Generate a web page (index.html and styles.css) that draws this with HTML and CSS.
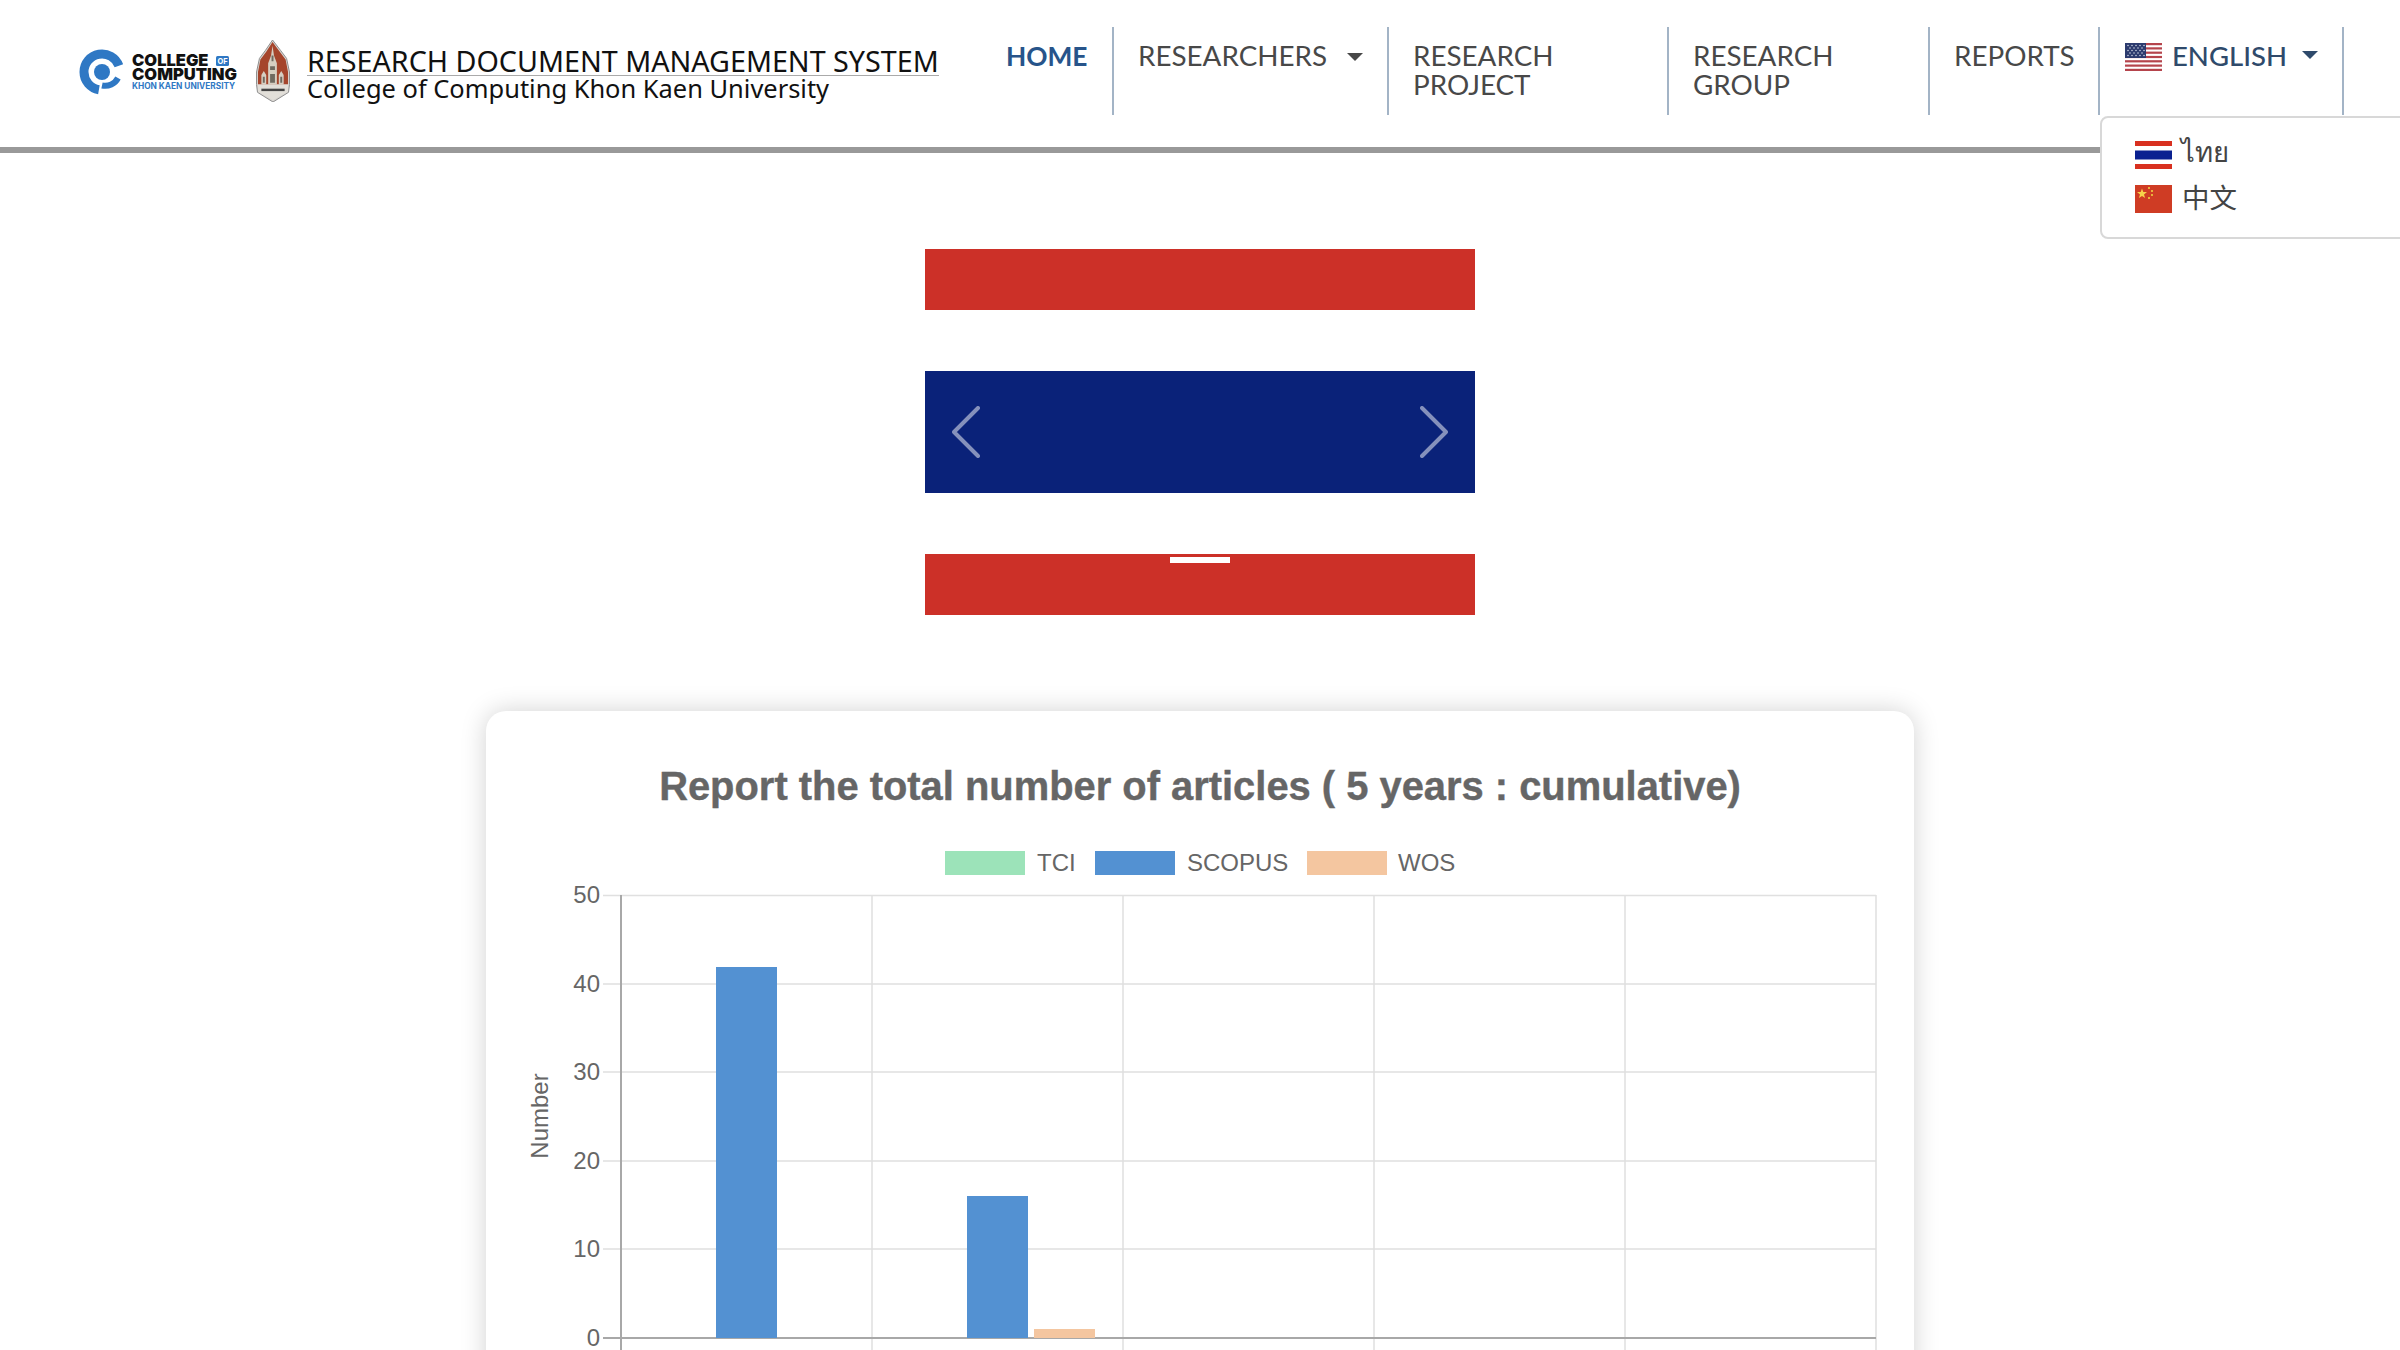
FILE: index.html
```html
<!DOCTYPE html>
<html lang="en">
<head>
<meta charset="utf-8">
<title>Research Document Management System</title>
<link rel="stylesheet" href="styles.css">
</head>
<body>
<header class="site-header">
  <a class="brand" href="#">
    <svg class="logo-coc" viewBox="0 0 162 50" width="162" height="50" aria-label="College of Computing">
      <path d="M40.900 18.800A18 18 0 1 0 20.900 42.700" class="logo-ring"/>
      <path d="M24 38.500A14.500 14.500 0 0 0 40 31" class="logo-ring-thin"/>
      <circle cx="24" cy="25" r="8" class="logo-dot"/>
      <rect x="138" y="9" width="13" height="10" rx="1.500" class="logo-of-box"/>
      <text class="logo-of" x="144.500" y="17">OF</text>
      <text class="logo-words"><tspan x="54" y="19" class="logo-big">COLLEGE</tspan><tspan x="54" y="33" class="logo-big">COMPUTING</tspan><tspan x="54" y="42" class="logo-small">KHON KAEN UNIVERSITY</tspan></text>
    </svg>
    <svg class="logo-crest" viewBox="0 0 38 64" width="38" height="62" aria-hidden="true">
      <path d="M18.500 0L27 11L33 19L36 33V46L35 54L19 64L3 54L2 46V33L5 19L11 11Z" class="crest-edge"/>
      <path d="M18.500 2L26 12L32 20L34.500 33V46H3.500V33L6 20L12 12Z" class="crest-red"/>
      <path d="M18.500 6L20 16L23 24V46H14V24L17 16Z" class="crest-tower"/>
      <path d="M7 46V36L9.500 32L12 36V46ZM25 46V36L27.500 32L30 36V46Z" class="crest-tower"/>
      <path d="M17.500 16h2v6h-2zM16 27h5v4h-5zM16 35h5v9h-5zM8.500 38h2v6h-2zM26.500 38h2v6h-2z" class="crest-dark"/>
      <path d="M3.500 46H34.500V53.500L19 62L3.500 53.500Z" class="crest-base"/>
      <path d="M7 51.500H31" class="crest-line"/>
    </svg>
    <span class="brand-text">
      <span class="brand-title">RESEARCH DOCUMENT MANAGEMENT SYSTEM</span>
      <span class="brand-sub">College of Computing Khon Kaen University</span>
    </span>
  </a>

  <nav class="main-nav">
    <a class="nav-item nav-active" href="#">HOME</a>
    <a class="nav-item" href="#">RESEARCHERS<i class="caret"></i></a>
    <a class="nav-item" href="#">RESEARCH<br>PROJECT</a>
    <a class="nav-item" href="#">RESEARCH<br>GROUP</a>
    <a class="nav-item" href="#">REPORTS</a>
    <div class="nav-item nav-lang">
      <svg class="flag" viewBox="0 0 37 28" width="37" height="28" aria-hidden="true">
        <rect width="37" height="28" fill="#fff"/>
        <g fill="#b5444c">
          <rect width="37" height="2.200"/><rect y="4.300" width="37" height="2.200"/><rect y="8.600" width="37" height="2.200"/>
          <rect y="12.900" width="37" height="2.200"/><rect y="17.200" width="37" height="2.200"/><rect y="21.500" width="37" height="2.200"/><rect y="25.800" width="37" height="2.200"/>
        </g>
        <rect width="21" height="15" fill="#2c3b6e"/>
        <g fill="#c8cfe0">
          <circle cx="3" cy="2.500" r=".8"/><circle cx="7" cy="2.500" r=".8"/><circle cx="11" cy="2.500" r=".8"/><circle cx="15" cy="2.500" r=".8"/><circle cx="19" cy="2.500" r=".8"/>
          <circle cx="5" cy="5" r=".8"/><circle cx="9" cy="5" r=".8"/><circle cx="13" cy="5" r=".8"/><circle cx="17" cy="5" r=".8"/>
          <circle cx="3" cy="7.500" r=".8"/><circle cx="7" cy="7.500" r=".8"/><circle cx="11" cy="7.500" r=".8"/><circle cx="15" cy="7.500" r=".8"/><circle cx="19" cy="7.500" r=".8"/>
          <circle cx="5" cy="10" r=".8"/><circle cx="9" cy="10" r=".8"/><circle cx="13" cy="10" r=".8"/><circle cx="17" cy="10" r=".8"/>
          <circle cx="3" cy="12.500" r=".8"/><circle cx="7" cy="12.500" r=".8"/><circle cx="11" cy="12.500" r=".8"/><circle cx="15" cy="12.500" r=".8"/><circle cx="19" cy="12.500" r=".8"/>
        </g>
      </svg>
      <span class="lang-current">ENGLISH</span><i class="caret caret-lang"></i>
      <div class="lang-menu">
        <a class="lang-option" href="#">
          <svg class="flag" viewBox="0 0 37 28" width="37" height="28" aria-hidden="true">
            <rect width="37" height="28" fill="#fff"/>
            <rect width="37" height="5" fill="#d83020"/><rect y="23" width="37" height="5" fill="#d83020"/>
            <rect y="9.500" width="37" height="9" fill="#0a2090"/>
          </svg>
          <span class="lang-thai">ไทย</span>
        </a>
        <a class="lang-option" href="#">
          <svg class="flag" viewBox="0 0 37 28" width="37" height="28" aria-hidden="true">
            <rect width="37" height="28" fill="#cf3c24"/>
            <path d="M7 3.500l1.300 3.600h3.700l-3 2.300 1.100 3.700L7 10.900 3.900 13.100 5 9.400 2 7.100h3.700z" fill="#f6d24a"/>
            <g fill="#e9b23c"><rect x="13" y="2" width="2" height="2"/><rect x="16" y="5" width="2" height="2"/><rect x="16" y="9" width="2" height="2"/><rect x="13" y="12" width="2" height="2"/></g>
          </svg>
          <span class="lang-zh">中文</span>
        </a>
      </div>
    </div>
  </nav>
</header>

<main class="page">
  <section class="carousel">
    <div class="stripe stripe-red"></div>
    <div class="stripe stripe-white"></div>
    <div class="stripe stripe-blue"></div>
    <div class="stripe stripe-white"></div>
    <div class="stripe stripe-red"></div>
    <svg class="carousel-arrow arrow-prev" viewBox="0 0 28 52" width="28" height="52" aria-hidden="true"><path d="M26 2L2 26L26 50"/></svg>
    <svg class="carousel-arrow arrow-next" viewBox="0 0 28 52" width="28" height="52" aria-hidden="true"><path d="M2 2L26 26L2 50"/></svg>
    <span class="carousel-indicator"></span>
  </section>

  <section class="chart-card">
    <h2 class="chart-title">Report the total number of articles ( 5 years : cumulative)</h2>
    <svg class="chart" viewBox="0 0 1428 560" width="1428" height="560">
      <g class="legend">
        <rect x="459" y="0" width="80" height="24" class="fill-tci"/>
        <text x="551" y="20">TCI</text>
        <rect x="609" y="0" width="80" height="24" class="fill-scopus"/>
        <text x="701" y="20">SCOPUS</text>
        <rect x="821" y="0" width="80" height="24" class="fill-wos"/>
        <text x="912" y="20">WOS</text>
      </g>
      <g class="grid">
        <path d="M117 44.500H1390M117 133H1390M117 221H1390M117 310H1390M117 398H1390"/>
        <path d="M386 44V500M637 44V500M888 44V500M1139 44V500M1390 44V500"/>
      </g>
      <g class="axis">
        <path d="M135 44V500M117 487H1390"/>
      </g>
      <g class="bars">
        <rect x="230" y="116" width="61" height="371" class="fill-scopus"/>
        <rect x="481" y="345" width="61" height="142" class="fill-scopus"/>
        <rect x="548" y="478" width="61" height="9" class="fill-wos"/>
      </g>
      <g class="ticks">
        <text x="114" y="52">50</text>
        <text x="114" y="141">40</text>
        <text x="114" y="229">30</text>
        <text x="114" y="318">20</text>
        <text x="114" y="406">10</text>
        <text x="114" y="495">0</text>
      </g>
      <text class="y-label" transform="translate(62 265) rotate(-90)">Number</text>
    </svg>
  </section>
</main>
</body>
</html>
```

FILE: styles.css
```css
* { box-sizing: border-box; }
html, body { margin: 0; height: 100%; overflow: hidden; background: #fff; }
body { font-family: "Liberation Sans", Arial, sans-serif; color: #444; }
a { color: inherit; text-decoration: none; }

.site-header {
  position: relative;
  z-index: 2;
  height: 153px;
  padding: 27px 56px 0 78px;
  display: flex;
  justify-content: space-between;
  align-items: flex-start;
  border-bottom: 6px solid #999;
  background: #fff;
}

.brand { display: flex; align-items: flex-start; }
.logo-coc { margin-top: 20px; flex: none; }
.logo-crest { margin: 13px 16px 0 14px; flex: none; }
.logo-ring { fill: none; stroke: #2f78c4; stroke-width: 9; }
.logo-ring-thin { fill: none; stroke: #2f78c4; stroke-width: 6; }
.logo-dot { fill: #2f78c4; }
.logo-words { font-family: "Inter", "Liberation Sans", sans-serif; }
.logo-big { font-size: 16.500px; font-weight: 900; fill: #111; }
.logo-small { font-size: 8.300px; font-weight: 700; fill: #2f78c4; }
.logo-of-box { fill: #2f78c4; }
.logo-of { font: 700 7.500px "Inter", "Liberation Sans", sans-serif; fill: #fff; text-anchor: middle; }
.crest-edge { fill: #d9d6d2; stroke: #8b8b8b; stroke-width: 1; }
.crest-red { fill: #a5452c; }
.crest-tower { fill: #d6cfc2; }
.crest-dark { fill: #6f6a60; }
.crest-base { fill: #e2dfd9; }
.crest-line { stroke: #444; stroke-width: 2.500; }

.brand-text { display: flex; flex-direction: column; width: 632px; margin: 19px 0 0 -1px; color: #111; }
.brand-title {
  font: 400 28.700px/29px "Noto Sans", "Liberation Sans", sans-serif;
  white-space: nowrap;
  border-bottom: 1px solid #aaa;
}
.brand-sub { font: 400 25.450px/24px "Noto Sans", "Liberation Sans", sans-serif; white-space: nowrap; }

.main-nav {
  display: grid;
  grid-template-columns: 133px 275px 280px 261px 170px 244px;
  font: 400 27.800px/28.500px "Lato", "Noto Sans", sans-serif;
  color: #484848;
}
.nav-item {
  position: relative;
  height: 88px;
  padding: 15px 0 0 24px;
  border-right: 2px solid #a3b4c6;
  white-space: nowrap;
}
.nav-active { color: #27548a; font-size: 26.300px; font-weight: 700; padding-left: 25px; }
.caret {
  display: inline-block;
  border-style: solid;
  border-width: 8px 8px 0;
  border-color: #484848 transparent transparent;
  margin-left: 20px;
  vertical-align: 5px;
}
.nav-lang { display: flex; align-items: flex-start; color: #2f4a6b; padding: 16px 0 0 25px; }
.flag { flex: none; display: block; }
.lang-current { margin: -1px 0 0 10px; font-size: 27.500px; font-weight: 500; }
.caret-lang { border-top-color: #2f4a6b; margin: 8px 0 0 15px; }

.lang-menu {
  position: absolute;
  left: 0;
  top: 89px;
  width: 320px;
  height: 123px;
  padding: 23px 0 0 33px;
  background: #fff;
  border: 2px solid #d8d8d8;
  border-radius: 8px;
  display: flex;
  flex-direction: column;
  gap: 16px;
  color: #444;
  font-size: 27.500px;
}
.lang-option { display: flex; align-items: center; height: 28px; }
.lang-thai { margin: 0 0 6px 9px; font-family: "Noto Sans", "DejaVu Sans", "Noto Sans CJK SC", sans-serif; }
.lang-zh { margin: 0 0 6px 10px; font-family: "Noto Sans CJK SC", sans-serif; }

.page { display: flex; flex-direction: column; align-items: center; }

.carousel {
  position: relative;
  width: 550px;
  height: 366px;
  margin-top: 96px;
  display: flex;
  flex-direction: column;
}
.stripe { flex: 1 1 0; }
.stripe-red { background: #cc3028; }
.stripe-white { background: #fff; }
.stripe-blue { flex: 2 1 0; background: #0a2279; }
.carousel-arrow {
  position: absolute;
  top: 157px;
  fill: none;
  stroke: rgba(255, 255, 255, .5);
  stroke-width: 4;
  stroke-linecap: round;
  stroke-linejoin: round;
}
.arrow-prev { left: 27px; }
.arrow-next { right: 27px; }
.carousel-indicator {
  position: absolute;
  left: 245px;
  bottom: 52px;
  width: 60px;
  height: 6px;
  background: #fff;
}

.chart-card {
  width: 1428px;
  height: 800px;
  margin-top: 96px;
  background: #fff;
  border-radius: 20px;
  box-shadow: 0 0 26px rgba(0, 0, 0, .18);
  flex: none;
}
.chart-title {
  margin: 0;
  padding-top: 52px;
  height: 140px;
  text-align: center;
  font: 700 39.900px/46px "Liberation Sans", Arial, sans-serif;
  color: #666;
  -webkit-text-stroke: .4px #666;
}
.chart { display: block; overflow: visible; }
.chart text { font: 400 24px "Liberation Sans", Arial, sans-serif; fill: #666; }
.fill-tci { fill: #9ce3b9; }
.fill-scopus { fill: #5391d2; }
.fill-wos { fill: #f4c6a0; }
.grid path { fill: none; stroke: #e0e0e0; stroke-width: 1.500; }
.axis path { fill: none; stroke: #a8a8a8; stroke-width: 2; }
.chart .ticks text { text-anchor: end; }
.chart .y-label { text-anchor: middle; }
```
